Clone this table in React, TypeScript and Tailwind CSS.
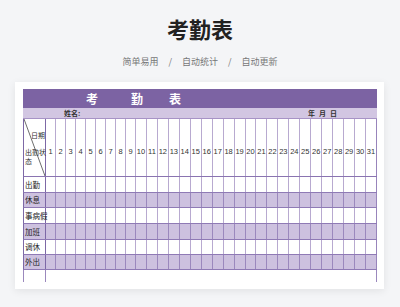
import React from "react";

const days = Array.from({ length: 31 }, (_, i) => i + 1);
const rows: { label: string; shade: boolean; h: string }[] = [
  { label: "出勤", shade: false, h: "h-[16px]" },
  { label: "休息", shade: true, h: "h-[15px]" },
  { label: "事病假", shade: false, h: "h-[16px]" },
  { label: "加班", shade: true, h: "h-[16px]" },
  { label: "调休", shade: false, h: "h-[15px]" },
  { label: "外出", shade: true, h: "h-[15px]" },
];

const gridCols =
  "grid grid-cols-[22px_repeat(9,10px)_repeat(22,minmax(0,1fr))]";

export default function App() {
  return (
    <div
      className="w-[400px] h-[307px] overflow-hidden bg-[#f4f5f7] text-[#333]"
      style={{ fontFamily: '"Noto Sans CJK SC", "Noto Sans", "Liberation Sans", sans-serif' }}
    >
      <div className="pt-[17px] h-[22px] box-content text-center text-[22px] leading-[22px] font-bold text-[#222]">
        考勤表
      </div>
      <div className="mt-[17px] h-[12px] flex justify-center items-center text-[9px] leading-[12px] text-[#777]">
        <span>简单易用</span>
        <span className="mx-[10px]">/</span>
        <span>自动统计</span>
        <span className="mx-[10px]">/</span>
        <span>自动更新</span>
      </div>
      <div className="mt-[14px] ml-[15px] w-[369px] h-[207px] bg-white shadow-[0_2px_8px_rgba(0,0,0,0.08)] pt-[7px] pl-[8px] pr-[7px]">
        {/* title bar */}
        <div className="h-[19px] bg-[#7c63a3] text-white font-bold text-[12px] leading-[19px] flex">
          <span className="ml-[63px]">考</span>
          <span className="ml-[33px]">勤</span>
          <span className="ml-[26px]">表</span>
        </div>
        {/* name band */}
        <div className="h-[11px] bg-[#d2c6e2] border-b border-[#a793c6] flex items-center text-[7px] leading-[10px] font-bold text-[#333]">
          <span className="ml-[41px]">姓名:</span>
          <span className="ml-auto mr-[40px] flex gap-[4px]">
            <span>年</span>
            <span>月</span>
            <span>日</span>
          </span>
        </div>
        {/* header row */}
        <div className={`${gridCols} h-[58px] border-l border-[#7d68a6] border-b border-b-[#8a74b1]`}>
          <div className="relative border-r border-[#7d68a6] text-[7px] leading-[9px]">
            <svg className="absolute inset-0 w-full h-full" preserveAspectRatio="none" viewBox="0 0 22 57">
              <line x1="0" y1="0" x2="22" y2="57" stroke="#444" strokeWidth="0.8" />
            </svg>
            <span className="absolute right-[0px] top-[12px]">日期</span>
            <span className="absolute left-[1px] top-[29px] w-[22px] leading-[9px] whitespace-nowrap">出勤状</span>
            <span className="absolute left-[1px] top-[38px]">态</span>
          </div>
          {days.map((d) => (
            <div
              key={d}
              className="border-r border-[#b8aad0] last:border-r-[#9884bb] flex items-center justify-center pt-[8px] text-[7.5px] text-[#333]"
              style={{ fontFamily: '"Liberation Sans", sans-serif' }}
            >
              {d}
            </div>
          ))}
        </div>
        {/* data rows */}
        {rows.map((r) => (
          <div
            key={r.label}
            className={`${gridCols} ${r.h} border-l border-[#7d68a6] border-b border-b-[#8f7ab5] ${
              r.shade ? "bg-[#cdc1df]" : "bg-white"
            }`}
          >
            <div className="border-r border-[#7d68a6] flex items-center pl-[1px] text-[7.5px] whitespace-nowrap text-[#222]">
              {r.label}
            </div>
            {days.map((d) => (
              <div
                key={d}
                className={`border-r ${r.shade ? "border-[#9b88bd]" : "border-[#b8aad0]"} last:border-r-[#9884bb]`}
              />
            ))}
          </div>
        ))}
        {/* trailing blank row */}
        <div className="flex h-[12px]">
          <div className="w-[23px] border-l border-r border-[#9b88bd]" />
          <div className="flex-1 border-r border-[#9b88bd]" />
        </div>
      </div>
    </div>
  );
}
